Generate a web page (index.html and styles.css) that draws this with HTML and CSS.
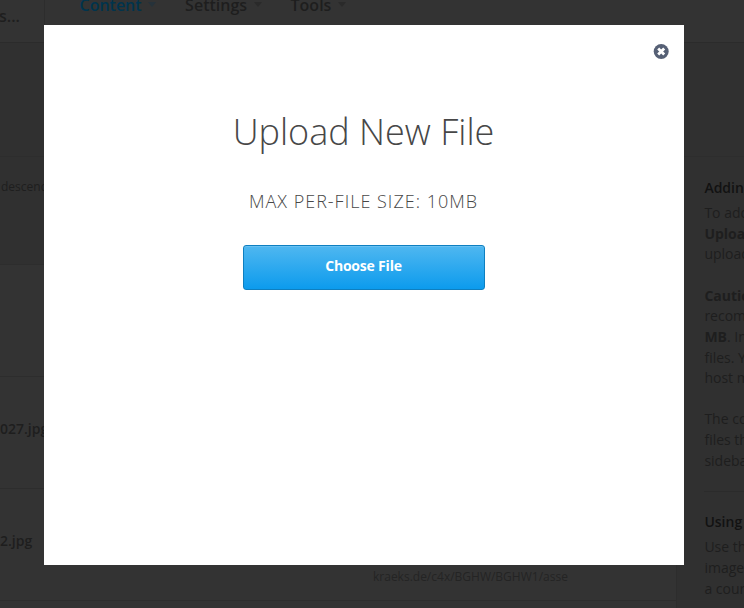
FILE: index.html
```html
<!DOCTYPE html>
<html lang="en">
<head>
<meta charset="utf-8">
<title>Files &amp; Uploads</title>
<link rel="stylesheet" href="styles.css">
</head>
<body>
<div class="page">
  <header class="header">
    <div class="course">s...</div>
    <nav class="nav">
      <a class="nav-item current">Content<i class="caret"></i></a>
      <a class="nav-item">Settings<i class="caret"></i></a>
      <a class="nav-item">Tools<i class="caret"></i></a>
    </nav>
  </header>
  <div class="mast"></div>
  <main class="content">
    <section class="assets">
      <div class="meta">descending</div>
      <div class="row head"></div>
      <div class="row"><strong>027.jpg</strong></div>
      <div class="row"><strong>2.jpg</strong><span class="url">kraeks.de/c4x/BGHW/BGHW1/asse</span></div>
    </section>
    <aside class="sidebar">
      <section class="bit">
        <h3>Adding</h3>
        <p class="lead">To add<br><b>Upload</b><br>upload</p>
        <p><b>Caution</b><br>recomm<br><b>MB</b>. In<br>files. Yo<br>host m</p>
        <p>The cou<br>files tha<br>sidebar</p>
      </section>
      <section class="bit second">
        <h3>Using</h3>
        <p>Use the<br>images<br>a cours</p>
      </section>
    </aside>
  </main>
</div>
<div class="modal">
  <button class="close" aria-label="Close">
    <svg width="16" height="16" viewBox="0 0 16 16"><circle cx="8.2" cy="8.5" r="7.5" fill="#566075"/><path d="M5.2 5.5l6 6M11.2 5.5l-6 6" stroke="#fff" stroke-width="2.8"/></svg>
  </button>
  <h1>Upload New File</h1>
  <p class="limit">Max per-file size: 10MB</p>
  <button class="choose">Choose File</button>
</div>
</body>
</html>
```

FILE: styles.css
```css
* { box-sizing: border-box; }
body {
  margin: 0;
  background: #303030;
  color: #1e1e1e;
  font-family: "Open Sans", sans-serif;
}
.page { height: 608px; overflow: hidden; white-space: nowrap; }
.header {
  display: flex;
  height: 43px;
  background: #333;
  border-bottom: 1px solid #2b2b2b;
}
.course {
  width: 46px;
  margin-left: -1px;
  padding-top: 5px;
  border-right: 1px solid #2d2d2d;
  font-size: 16px;
  font-weight: 600;
  line-height: 22px;
}
.nav { display: flex; gap: 29px; padding-left: 34.5px; }
.nav-item {
  display: flex;
  height: 24px;
  margin-top: -7px;
  font-size: 16px;
  font-weight: 600;
  line-height: 24px;
}
.nav-item.current { color: #00344d; }
.caret {
  width: 0;
  height: 0;
  margin: 9px 0 0 6.5px;
  border: 4.5px solid transparent;
  border-top: 5px solid #2a2a2a;
  border-bottom: 0;
}
.current .caret { border-top-color: #26323a; }
.mast { height: 114px; border-bottom: 1px solid #2d2d2d; }
.content { display: flex; height: 451px; }
.assets { flex: none; width: 677px; border-right: 1px solid #2d2d2d; }
.meta {
  height: 107px;
  padding: 21px 0 0 1px;
  font-size: 12px;
  line-height: 18px;
}
.row {
  display: flex;
  height: 112px;
  padding-top: 42px;
  border-top: 1px solid #2d2d2d;
  background: #333;
  font-size: 14px;
  line-height: 20px;
}
.row strong { width: 373px; font-weight: 600; }
.url { padding-top: 36px; color: #242424; font-size: 12px; }
.assets::after { content: ""; display: block; height: 10px; border-top: 1px solid #2d2d2d; background: #333; }
.sidebar { flex: none; width: 120px; padding: 20px 0 0 27.4px; font-size: 14px; line-height: 20.6px; }
.sidebar h3 { margin: 0 0 4px; color: #121212; font-size: 14px; font-weight: 600; line-height: 22px; }
.sidebar p { margin: 0 0 20.6px; }
.sidebar .lead { margin-bottom: 21.1px; }
.sidebar b { font-weight: 700; }
.second { margin-top: -1px; border-top: 1px solid #2b2b2b; padding-top: 19px; }
.second h3 { margin-bottom: 4.6px; }
.modal {
  position: absolute;
  top: 25px;
  left: 44px;
  display: flex;
  flex-direction: column;
  align-items: center;
  width: 640px;
  height: 540px;
  background: #fff;
}
.close {
  align-self: flex-end;
  width: 16px;
  height: 16px;
  margin: 18px 15px 0 0;
  padding: 0;
  border: 0;
  background: none;
}
.close svg { display: block; }
h1 {
  margin: 45px 0 0;
  padding-right: 1px;
  color: #474747;
  font-size: 36px;
  font-weight: 300;
  line-height: 56px;
}
.limit {
  margin: 27px 0 0;
  padding-right: 1px;
  color: #474747;
  font-size: 18px;
  font-weight: 300;
  line-height: 28px;
  letter-spacing: 1px;
  text-transform: uppercase;
}
.choose {
  width: 242px;
  height: 45px;
  margin-top: 30px;
  padding: 0 1px 3px 0;
  border: 1px solid #0e7fc0;
  border-radius: 3px;
  background: linear-gradient(#4fb7f0, #0c9bed);
  box-shadow: inset 0 1px 0 rgba(255, 255, 255, .15);
  color: #fff;
  font: 700 14px/20px "Open Sans", sans-serif;
  letter-spacing: -.2px;
}
```
